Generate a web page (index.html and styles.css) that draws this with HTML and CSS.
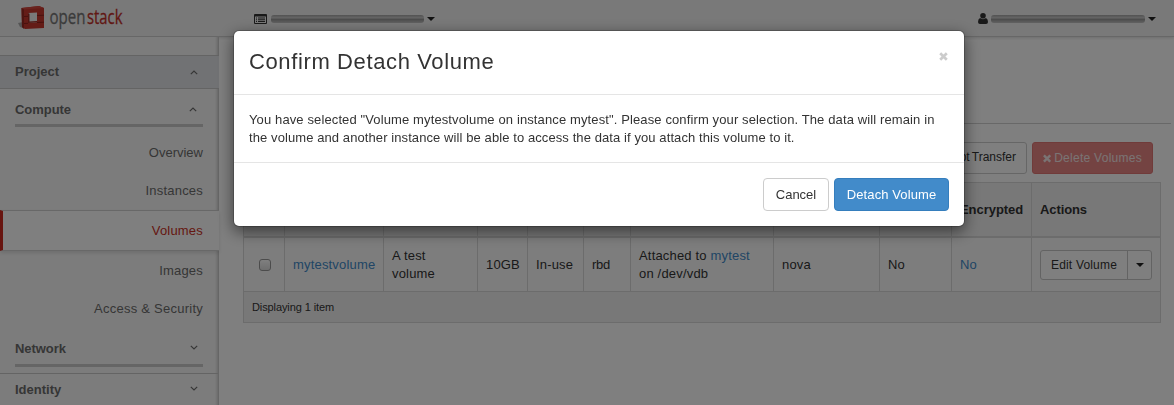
FILE: index.html
```
<!DOCTYPE html>
<html lang="en">
<head>
<meta charset="utf-8">
<title>Volumes - OpenStack Dashboard</title>
<link rel="stylesheet" href="styles.css">
</head>
<body>
<header class="topbar">
  <svg class="logo" width="106" height="28" viewBox="0 0 106 28">
    <path class="logo-shadow" d="M1 19l5-1v6l-3-1z"/>
    <path class="logo-front" fill-rule="evenodd" d="M4.500 4L22 2l5 2v20L8 25 5 23zM11 9v10l9-.8V8.500z"/>
    <path class="logo-top" d="M4.500 4L22 2l5 2-20 1.500z"/>
    <path class="logo-inner" d="M4.500 4L7 5.500V25L5 23zM11 9l1.500.8v7.700L11 19zM11 19l1.500-1.500 7.500-.6v1.300z"/>
    <path class="logo-seam" d="M7 12.500l4-.2M20 11.500l7-.3M7 19.500l4-.2M20 18.500l7-.3"/>
    <text class="logo-text" x="32.500" y="19.500" textLength="36" lengthAdjust="spacingAndGlyphs">open</text>
    <text class="logo-text logo-red" x="70" y="19.500" textLength="35.500" lengthAdjust="spacingAndGlyphs">stack</text>
  </svg>
  <div class="picker project-picker">
    <svg width="13" height="10" viewBox="0 0 13 10"><path fill-rule="evenodd" d="M1 0h11q1 0 1 1v8q0 1-1 1H1q-1 0-1-1V1q0-1 1-1zM1 2.500V9h11V2.500zM2 3.500h1v1H2zm2 0h7v1H4zM2 5.300h1v1H2zm2 0h7v1H4zM2 7.100h1v1H2zm2 0h7v1H4z"/></svg>
    <span class="smudge"></span><span class="caret"></span>
  </div>
  <div class="picker user-picker">
    <svg width="10" height="11" viewBox="0 0 10 11"><circle cx="5" cy="2.800" r="2.800"/><path d="M2 5q3 2.300 6 0 2 .8 2 4 0 2-2 2H2q-2 0-2-2 0-3.200 2-4z"/></svg>
    <span class="smudge"></span><span class="caret"></span>
  </div>
</header>
<div class="page">
  <nav class="sidebar">
    <div class="panel-head active">Project<svg class="chev" width="8" height="5" viewBox="0 0 8 5"><path d="M.8 4.200L4 1l3.200 3.200"/></svg></div>
    <div class="group first"><div class="group-head">Compute<svg class="chev" width="8" height="5" viewBox="0 0 8 5"><path d="M.8 4.200L4 1l3.200 3.200"/></svg></div></div>
    <a class="item overview">Overview</a>
    <a class="item">Instances</a>
    <a class="item current">Volumes</a>
    <a class="item">Images</a>
    <a class="item access">Access &amp; Security</a>
    <div class="group network"><div class="group-head">Network<svg class="chev down" width="8" height="5" viewBox="0 0 8 5"><path d="M.8 .8L4 4 7.200.8"/></svg></div></div>
    <div class="panel-head identity">Identity<svg class="chev down" width="8" height="5" viewBox="0 0 8 5"><path d="M.8 .8L4 4 7.200.8"/></svg></div>
  </nav>
  <main class="content">
    <div class="page-header"></div>
    <div class="actions">
      <button class="btn transfer">Accept Transfer</button>
      <button class="btn danger"><svg width="9" height="9" viewBox="0 0 9 9"><path d="M1 1l7 7m0-7l-7 7"/></svg><span>Delete Volumes</span></button>
    </div>
    <table class="volumes">
      <colgroup><col class="c1"><col class="c2"><col class="c3"><col class="c4"><col class="c5"><col class="c6"><col class="c7"><col class="c8"><col class="c9"><col class="c10"><col class="c11"></colgroup>
      <thead><tr><th></th><th></th><th></th><th></th><th></th><th></th><th></th><th></th><th></th><th>Encrypted</th><th class="act">Actions</th></tr></thead>
      <tbody><tr>
        <td class="check"><span class="box"></span></td>
        <td><a>mytestvolume</a></td>
        <td>A test<br>volume</td>
        <td>10GB</td>
        <td>In-use</td>
        <td class="tight">rbd</td>
        <td class="attached">Attached to <a>mytest</a><br>on /dev/vdb</td>
        <td>nova</td>
        <td>No</td>
        <td><a>No</a></td>
        <td><div class="split"><button class="edit">Edit Volume</button><button class="more"><span class="caret"></span></button></div></td>
      </tr></tbody>
      <tfoot><tr><td colspan="11">Displaying 1 item</td></tr></tfoot>
    </table>
  </main>
</div>
<div class="backdrop">
  <section class="modal">
    <div class="modal-header"><h3>Confirm Detach Volume</h3>
      <svg class="close" width="9" height="9" viewBox="0 0 9 9"><path d="M1.200 1.200l6.600 6.600m0-6.600l-6.600 6.600"/></svg></div>
    <div class="modal-body"><span class="line1">You have selected "Volume mytestvolume on instance mytest". Please confirm your selection. The data will remain in</span><br><span class="line2">the volume and another instance will be able to access the data if you attach this volume to it.</span></div>
    <div class="modal-footer"><button class="btn cancel">Cancel</button><button class="btn primary">Detach Volume</button></div>
  </section>
</div>
</body>
</html>
```
FILE: styles.css
```
* { box-sizing: border-box; }
body { margin: 0; height: 405px; overflow: hidden; background: #fff; color: #333; font: 13px/18px "Liberation Sans", Arial, sans-serif; letter-spacing: .12px; }
button { font: inherit; letter-spacing: inherit; margin: 0; }
a { color: #428bca; }

.topbar { height: 37px; display: flex; align-items: flex-start; padding-left: 17px; background: #f2f2f2; border-bottom: 1px solid #cfcfcf; box-shadow: 0 1px 3px rgba(0,0,0,.14); }
.logo { margin-top: 4px; overflow: visible; }
.logo-text { font: 20px "Open Sans", sans-serif; letter-spacing: 0; fill: #777; stroke: #777; stroke-width: .3px; }
.logo-red { fill: #c32f28; stroke: #c32f28; }
.logo-shadow { fill: #aaa; }
.logo-front { fill: #c8382f; }
.logo-top { fill: #d4483f; }
.logo-inner { fill: #9c2a22; }
.logo-seam { fill: none; stroke: #8f231c; stroke-width: 1; }
.picker { display: flex; align-items: center; height: 11px; margin-top: 13px; }
.picker svg { fill: #333; }
.project-picker { margin-left: 131px; }
.user-picker { margin-left: auto; margin-right: 18px; }
.smudge { width: 153px; height: 8px; margin: 0 3px 0 4px; border-radius: 3px; background: linear-gradient(#a5a5a5, #cacaca 35%, #999 55%, #c4c4c4); filter: blur(.7px); }
.user-picker .smudge { width: 154px; margin: 0 3px; }
.caret { width: 0; height: 0; border: 4px solid transparent; border-top-color: #222; border-bottom: 0; }

.page { display: flex; height: 368px; }
.sidebar { width: 219px; background: #f9f9f9; border-right: 1px solid #ccc; box-shadow: inset -3px 0 3px -2px rgba(0,0,0,.18); padding-top: 18px; color: #6c6c6c; }
.panel-head { display: flex; justify-content: space-between; height: 34px; padding: 7px 21px 0 15px; font-weight: bold; letter-spacing: 0; border-top: 1px solid #c9c9c9; }
.panel-head.active { width: 219px; background: #e2e5e8; border-bottom: 1px solid #c9c9c9; }
.chev { fill: none; stroke: #6c6c6c; stroke-width: 1.2; margin-top: 7px; }
.chev.down { margin: 5px -1px 0 0; }
.group { height: 46px; padding: 12px 15px 0; font-weight: bold; letter-spacing: -.05px; }
.group-head { display: flex; justify-content: space-between; height: 26px; padding-right: 6px; border-bottom: 3px solid #cbcbcb; }
.first .chev { margin-top: 6px; }
.item { display: block; height: 38px; padding: 10px 15px 0 0; text-align: right; color: #6c6c6c; letter-spacing: .2px; }
.overview { height: 37px; padding-top: 9px; letter-spacing: 0; }
.current { width: 219px; height: 41px; padding-top: 11px; padding-right: 16px; background: #fff; color: #cb3024; border-left: 3px solid #d02b20; border-top: 1px solid #d0d0d0; border-bottom: 1px solid #d0d0d0; box-shadow: 0 2px 4px rgba(0,0,0,.12); }
.current + .item { padding-top: 11px; }
.access { height: 40px; padding-top: 11px; letter-spacing: .25px; }
.network { height: 44px; padding-top: 11px; }
.network .group-head { height: 27px; }
.identity { width: 218px; }

.content { flex: 1; padding-right: 13px; }
.page-header { height: 87px; margin: 0 -10px 0 24px; border-bottom: 1px solid #d0d0d0; }
.actions { display: flex; justify-content: flex-end; gap: 5px; padding: 18px 8px 8px 0; height: 58px; }
.btn { height: 32px; padding: 0 10px; border: 1px solid #ccc; border-radius: 3px; background: #fff; color: #333; white-space: nowrap; font-size: 12px; }
.transfer { letter-spacing: 0; padding-bottom: 2px; word-spacing: -1px; }
.btn.danger { width: 121px; display: flex; align-items: center; gap: 3px; background: #e88785; border-color: #e07675; color: #f5e8e8; letter-spacing: .27px; }
.danger svg { fill: none; stroke: #f5e8e8; stroke-width: 2.7; }
.volumes { width: 918px; margin-left: 24px; border-spacing: 0; table-layout: fixed; border-top: 1px solid #d8d8d8; border-right: 1px solid #d8d8d8; letter-spacing: .18px; }
.volumes th, .volumes td { padding: 0 0 0 8px; text-align: left; border-left: 1px solid #d8d8d8; border-bottom: 1px solid #d8d8d8; white-space: nowrap; }
.volumes th { height: 55px; background: #f1f1f1; border-bottom-width: 2px; letter-spacing: -.05px; }
.volumes td { height: 54px; background: #fbfbfb; }
.volumes .act { letter-spacing: -.1px; }
.volumes .tight { letter-spacing: -.3px; }
.volumes tfoot td { height: 31px; background: #f1f1f1; font-size: 11px; letter-spacing: -.1px; }
.volumes .check { padding-left: 15px; }
.box { display: block; width: 12px; height: 12px; border: 1px solid #999; border-radius: 3px; background: linear-gradient(#fff, #ddd); }
.c1 { width: 41px; } .c2 { width: 99px; } .c3 { width: 94px; } .c4 { width: 50px; }
.c5 { width: 56px; } .c6 { width: 47px; } .c7 { width: 143px; } .c8 { width: 106px; }
.c9 { width: 72px; } .c10 { width: 80px; } .c11 { width: 129px; }
.split { display: flex; width: 112px; height: 30px; border: 1px solid #c6c6c6; border-radius: 3px; background: #fff; }
.edit, .more { border: 0; padding: 0; background: none; color: #333; }
.edit { width: 87px; border-right: 1px solid #c6c6c6; font-size: 12px; }
.more { flex: 1; display: flex; align-items: center; justify-content: center; }

.backdrop { position: fixed; inset: 0; background: rgba(0,0,0,.5); padding: 30px 0 0 233px; }
.modal { width: 732px; height: 197px; border: 1px solid rgba(0,0,0,.2); border-radius: 6px; background: #fff; background-clip: padding-box; box-shadow: 0 5px 15px rgba(0,0,0,.5); }
.modal-header { display: flex; justify-content: space-between; height: 64px; padding: 15px 16px 0 15px; border-bottom: 1px solid #e5e5e5; }
.modal h3 { margin: 0; font: 22px/32px "Liberation Sans", Arial, sans-serif; letter-spacing: .62px; }
.close { margin-top: 6px; fill: none; stroke: #ccc; stroke-width: 2.7; }
.modal-body { height: 67px; padding: 16px 15px; white-space: nowrap; }
.line2 { letter-spacing: .09px; }
.modal-footer { display: flex; justify-content: flex-end; gap: 5px; height: 65px; padding: 15px; border-top: 1px solid #e5e5e5; }
.modal .btn { height: 33px; padding: 0; font-size: 13px; border-radius: 4px; }
.modal .cancel { width: 66px; letter-spacing: 0; }
.modal .primary { width: 115px; background: #428bca; border-color: #357ebd; color: #fff; letter-spacing: .1px; }
```
